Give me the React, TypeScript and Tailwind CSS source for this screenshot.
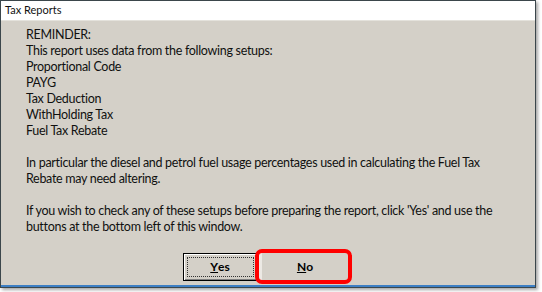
import React from 'react';

const lines = [
  'REMINDER:',
  'This report uses data from the following setups:',
  'Proportional Code',
  'PAYG',
  'Tax Deduction',
  'WithHolding Tax',
  'Fuel Tax Rebate',
];

const App: React.FC = () => {
  return (
    <div className="w-[542px] h-[292px] bg-white overflow-hidden" style={{ fontFamily: 'Lato, "Liberation Sans", sans-serif' }}>
      <div className="w-[536px] h-[288px] border border-[#3b464b] flex flex-col shadow-[2px_2px_3px_rgba(0,0,0,0.35)]">
        <div className="h-[20px] shrink-0 bg-white flex items-center pl-[4px] text-[11px] text-[#111] border-b border-[#e4e2dc]">
          Tax Reports
        </div>
        <div className="flex-1 bg-[#d4d0c8] flex flex-col border-b-2 border-[#3d7fc4]">
          <div className="pl-[25px] pt-[6px] text-[12.5px] tracking-[-0.3px] leading-[16px] text-[#101010] whitespace-nowrap">
            {lines.map((l) => (
              <div key={l}>{l}</div>
            ))}
            <div className="h-[16px]" />
            <div>In particular the diesel and petrol fuel usage percentages used in calculating the Fuel Tax</div>
            <div>Rebate may need altering.</div>
            <div className="h-[16px]" />
            <div>If you wish to check any of these setups before preparing the report, click 'Yes' and use the</div>
            <div>buttons at the bottom left of this window.</div>
          </div>
          <div className="flex justify-center mt-[18px] pr-[5px]">
            <button className="w-[75px] h-[28px] bg-[#d4d0c8] border border-black shadow-[inset_1px_1px_0_#fff,inset_-1px_-1px_0_#808080] flex items-center justify-center p-[3px]">
              <span className="w-full h-full border border-dotted border-[#333] flex items-center justify-center text-[12px] font-bold">
                <span className="underline">Y</span>es
              </span>
            </button>
            <div className="relative">
              <button className="w-[91px] h-[28px] bg-[#d4d0c8] border-l-[4px] border-l-[#ece9e4] shadow-[inset_-1px_-1px_0_#808080] flex items-center justify-center text-[12px] font-bold">
                <span className="underline">N</span>o
              </button>
              <div className="absolute left-[-3px] top-[-4px] w-[97px] h-[35px] border-[4px] border-[#f00] rounded-[7px]" />
            </div>
          </div>
        </div>
      </div>
    </div>
  );
};

export default App;
